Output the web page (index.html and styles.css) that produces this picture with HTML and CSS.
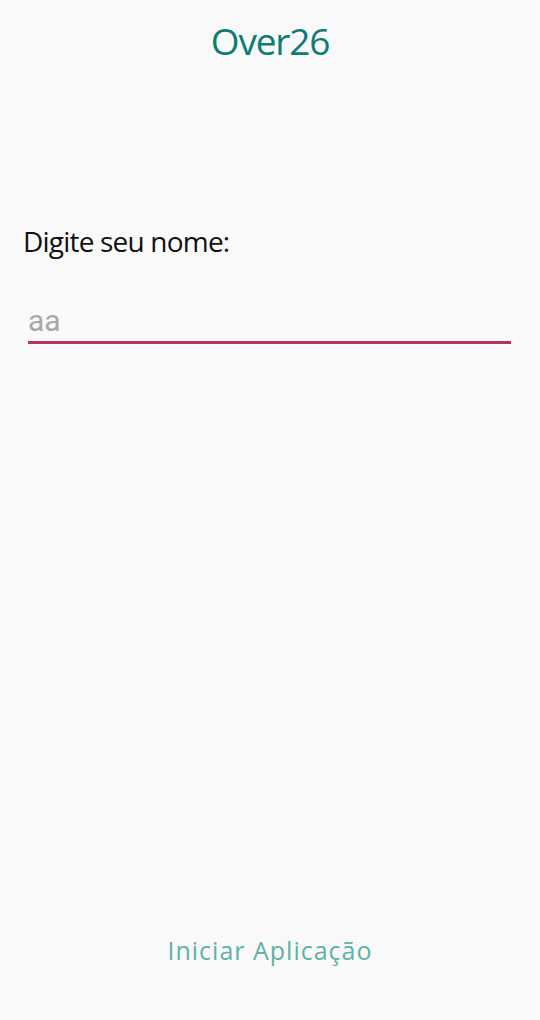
FILE: index.html
```html
<!DOCTYPE html>
<html lang="pt">
<head>
<meta charset="utf-8">
<link rel="stylesheet" href="styles.css">
<title>Over26</title>
</head>
<body>
<div class="screen">
  <header class="title">Over26</header>
  <main class="form">
    <label class="label" for="nome">Digite seu nome:</label>
    <div class="field">
      <input id="nome" class="input" type="text" placeholder="aa">
    </div>
  </main>
  <footer class="actions">
    <button class="start">Iniciar Aplicação</button>
  </footer>
</div>
</body>
</html>
```

FILE: styles.css
```css
html, body {
  margin: 0;
  padding: 0;
  background: #f9f9f9;
}
.screen {
  width: 540px;
  height: 1020px;
  display: flex;
  flex-direction: column;
  font-family: "Open Sans", "Noto Sans", sans-serif;
}
.title {
  text-align: center;
  color: #0d7c72;
  font-size: 37px;
  line-height: 40px;
  padding-top: 21px;
  font-weight: 500;
  letter-spacing: -1.2px;
}
.form {
  flex: 1;
  padding: 163px 29px 0 23px;
  display: flex;
  flex-direction: column;
}
.label {
  color: #111;
  font-size: 28px;
  line-height: 34px;
  letter-spacing: -0.8px;
}
.field {
  margin-top: 45px;
  margin-left: 5px;
  border-bottom: 3px solid #b8325e;
}
.input {
  display: block;
  width: 100%;
  box-sizing: border-box;
  border: 0;
  background: transparent;
  font-family: Roboto, sans-serif;
  font-size: 30px;
  line-height: 34px;
  height: 38px;
  padding: 0 0 4px 0;
  color: #222;
  outline: none;
}
.input::placeholder {
  color: #a8a8a8;
}
.actions {
  display: flex;
  justify-content: center;
  padding-bottom: 55px;
}
.start {
  border: 0;
  background: transparent;
  color: #5db3a8;
  font-family: "Open Sans", "Noto Sans", sans-serif;
  font-size: 25px;
  line-height: 30px;
  padding: 0;
  letter-spacing: 1px;
}
```
